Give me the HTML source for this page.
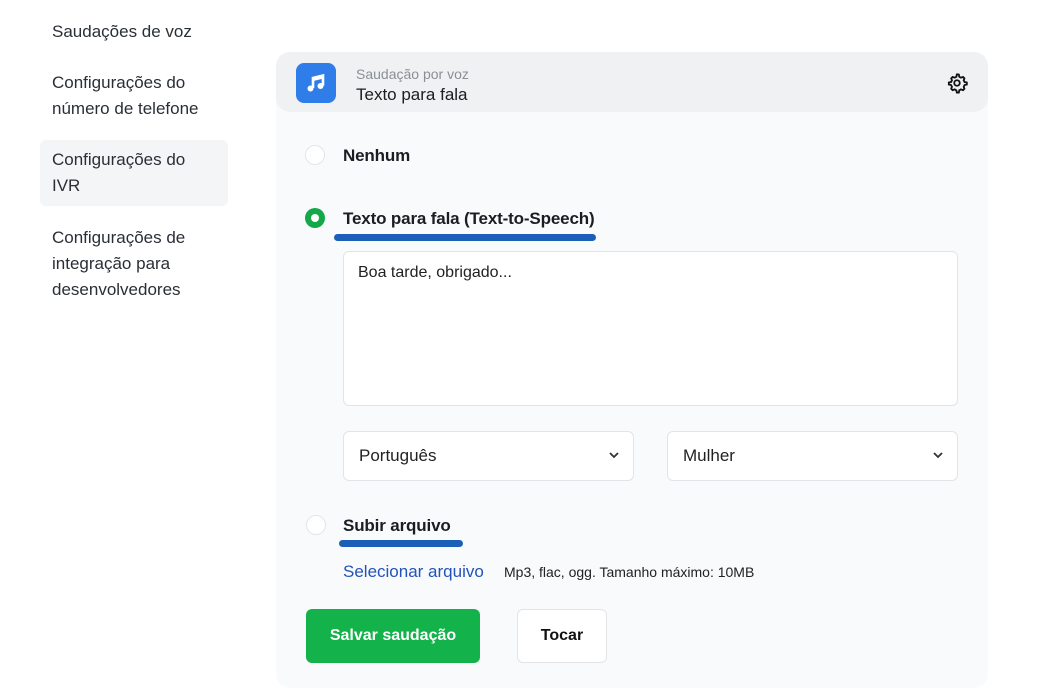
<!DOCTYPE html>
<html><head><meta charset="utf-8"><style>
*{box-sizing:border-box;margin:0;padding:0}
body{width:1041px;height:694px;background:#fff;font-family:"Liberation Sans",sans-serif;color:#1f2328;position:relative;overflow:hidden}
.a{position:absolute}
.nav{font-size:17px;line-height:26px;color:#2a2f36}
.panel{left:276px;top:52px;width:712px;height:636px;background:#f9fafc;border-radius:14px}
.hdr{left:276px;top:52px;width:712px;height:60px;background:#f0f1f3;border-radius:14px}
.radio{width:20px;height:20px;border-radius:50%;border:1px solid #e3e5e8;background:#fff}
.lbl{font-size:17px;font-weight:bold;color:#1a1d21;letter-spacing:-0.15px}
.ul{height:7px;background:#1b5fb8;border-radius:4px}
.box{background:#fff;border:1px solid #e2e4e8;border-radius:6px}
.sel{font-size:17px;color:#222;padding:0 15px;line-height:48px}
</style></head><body>
<div class="a nav" style="left:52px;top:19px">Saudações de voz</div>
<div class="a nav" style="left:52px;top:70px">Configurações do<br>número de telefone</div>
<div class="a" style="left:40px;top:140px;width:188px;height:66px;background:#f4f5f7;border-radius:6px"></div>
<div class="a nav" style="left:52px;top:147px">Configurações do<br>IVR</div>
<div class="a nav" style="left:52px;top:225px">Configurações de<br>integração para<br>desenvolvedores</div>
<div class="a panel"></div>
<div class="a hdr"></div>
<div class="a" style="left:296px;top:63px;width:40px;height:40px;background:#2f7de9;border-radius:8px"></div>
<svg class="a" style="left:304px;top:71px" width="24" height="24" viewBox="0 0 24 24"><path d="M9 17V7l10-2.5v10" stroke="#fff" stroke-width="2.6" fill="none"/><path d="M9 8l10-2.5" stroke="#fff" stroke-width="4"/><circle cx="6.5" cy="17.5" r="3" fill="#fff"/><circle cx="16.5" cy="15" r="3" fill="#fff"/></svg>
<div class="a" style="left:356px;top:66px;font-size:14px;color:#8a8f96">Saudação por voz</div>
<div class="a" style="left:356px;top:85px;font-size:17px;color:#1a1d21">Texto para fala</div>
<svg class="a" style="left:946px;top:72px" width="22" height="22" viewBox="0 0 24 24" fill="none" stroke="#111" stroke-width="2"><circle cx="12" cy="12" r="3"/><path d="M12 2.5l2 .3.5 2.4 1.8 1 2.3-.8 1.5 1.5-.8 2.3 1 1.8 2.4.5v2.2l-2.4.5-1 1.8.8 2.3-1.5 1.5-2.3-.8-1.8 1-.5 2.4h-2.2l-.5-2.4-1.8-1-2.3.8-1.5-1.5.8-2.3-1-1.8-2.4-.5v-2.2l2.4-.5 1-1.8-.8-2.3 1.5-1.5 2.3.8 1.8-1 .5-2.4z"/></svg>
<div class="a radio" style="left:305px;top:145px"></div>
<div class="a lbl" style="left:343px;top:146px">Nenhum</div>
<div class="a" style="left:305px;top:208px;width:20px;height:20px;border-radius:50%;background:#14a84a"></div>
<div class="a" style="left:311px;top:214px;width:8px;height:8px;border-radius:50%;background:#fff"></div>
<div class="a lbl" style="left:343px;top:209px">Texto para fala (Text-to-Speech)</div>
<div class="a ul" style="left:334px;top:234px;width:262px"></div>
<div class="a box" style="left:343px;top:251px;width:615px;height:155px"></div>
<div class="a" style="left:358px;top:264px;font-size:16px;color:#222">Boa tarde, obrigado...</div>
<div class="a box sel" style="left:343px;top:431px;width:291px;height:50px">Português</div>
<div class="a box sel" style="left:667px;top:431px;width:291px;height:50px">Mulher</div>
<svg class="a" style="left:608px;top:450px" width="12" height="10" viewBox="0 0 12 10"><path d="M2 3l4 4 4-4" stroke="#333" stroke-width="1.8" fill="none"/></svg>
<svg class="a" style="left:932px;top:450px" width="12" height="10" viewBox="0 0 12 10"><path d="M2 3l4 4 4-4" stroke="#333" stroke-width="1.8" fill="none"/></svg>
<div class="a radio" style="left:306px;top:515px"></div>
<div class="a lbl" style="left:343px;top:516px">Subir arquivo</div>
<div class="a ul" style="left:339px;top:540px;width:124px"></div>
<div class="a" style="left:343px;top:562px;font-size:17px;color:#2453b8">Selecionar arquivo</div>
<div class="a" style="left:504px;top:564px;font-size:14px;color:#222">Mp3, flac, ogg. Tamanho máximo: 10MB</div>
<div class="a" style="left:306px;top:609px;width:174px;height:54px;background:#14b24a;border-radius:6px;color:#fff;font-size:16px;font-weight:bold;text-align:center;line-height:54px">Salvar saudação</div>
<div class="a box" style="left:517px;top:609px;width:90px;height:54px;font-size:16px;font-weight:bold;text-align:center;line-height:52px;color:#111">Tocar</div>
</body></html>
